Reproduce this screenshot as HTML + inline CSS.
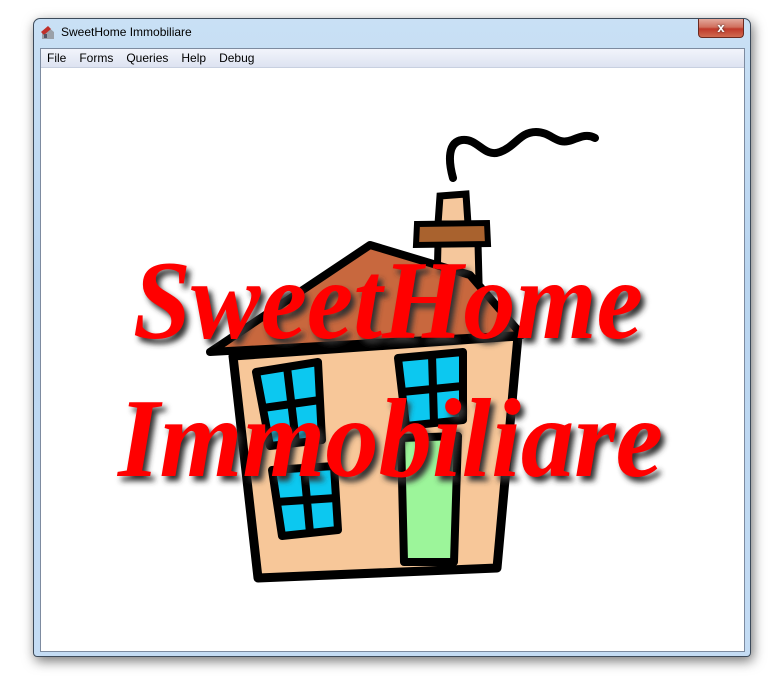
<!DOCTYPE html>
<html><head><style>
html,body{margin:0;padding:0;background:#fff;width:780px;height:680px;overflow:hidden;font-family:"Segoe UI","Liberation Sans",sans-serif;}
.win{position:absolute;left:33px;top:18px;width:718px;height:639px;border:1px solid #3c4a5a;border-radius:7px 7px 4px 4px;background:linear-gradient(180deg,#c9e0f5 0%,#b9d5f0 40%,#c4dcf4 100%);box-shadow:2px 4px 12px rgba(0,0,0,.55);box-sizing:border-box;}
.title{position:absolute;left:27px;top:6px;font-size:12px;color:#000;}
.icon{position:absolute;left:7px;top:7px;width:14px;height:14px;}
.close{position:absolute;left:664px;top:0px;width:46px;height:19px;border:1px solid #6b2a20;border-top:none;border-radius:0 0 4px 4px;background:linear-gradient(180deg,#e3a89c 0%,#d0705e 45%,#c0392a 55%,#d06a50 100%);box-sizing:border-box;color:#fff;text-align:center;font:bold 13px/17px "Liberation Sans",sans-serif;text-shadow:0 0 2px #333;}
.client{position:absolute;left:6px;top:29px;width:705px;height:604px;border:1px solid #7d8ba0;background:#fff;box-sizing:border-box;}
.menu{height:18px;background:linear-gradient(180deg,#f2f4fb,#dde3f1);border-bottom:1px solid #c8d0e0;font-size:12px;line-height:18px;}
.menu span{margin-left:6px;margin-right:7px;}
</style></head><body>
<div class="win">
<svg class="icon" viewBox="0 0 14 14"><path d="M1 6 L7 1 L13 6 L13 13 L1 13Z" fill="#9aa0a8"/><path d="M0 6 L7 0 L10 3 L3 9Z" fill="#c0302a"/><rect x="3" y="8" width="3" height="4" fill="#556"/></svg>
<div class="title">SweetHome Immobiliare</div>
<div class="close">x</div>
<div class="client">
<div class="menu"><span>File</span><span>Forms</span><span>Queries</span><span>Help</span><span>Debug</span></div>
</div>
</div>
<svg style="position:absolute;left:0;top:0" width="780" height="680" viewBox="0 0 780 680">
<defs><filter id="sh" x="-10%" y="-20%" width="120%" height="140%"><feGaussianBlur stdDeviation="3"/></filter></defs>
<!-- smoke -->
<path d="M453 178 C448 160 448 142 462 140 C478 138 484 158 500 152 C516 146 520 132 536 132 C552 132 556 146 572 140 C582 136 588 134 595 138" fill="none" stroke="#000" stroke-width="8" stroke-linecap="round"/>
<!-- chimney -->
<path d="M440 196 L466 194 L468 224 L438 224Z" fill="#f5c79c" stroke="#000" stroke-width="7"/>
<path d="M438 244 L478 243 L480 320 L436 322Z" fill="#f5c79c" stroke="#000" stroke-width="7"/>
<path d="M417 224 L487 223 L488 244 L416 245Z" fill="#a9622e" stroke="#000" stroke-width="6"/>
<!-- roof -->
<path d="M210 352 L370 245 L470 275 L522 335Z" fill="#c8683e" stroke="#000" stroke-width="8" stroke-linejoin="round"/>
<!-- body -->
<path d="M233 356 L518 336 L497 568 L258 578Z" fill="#f7c799" stroke="#000" stroke-width="9" stroke-linejoin="round"/>
<!-- windows -->
<g stroke="#000" stroke-width="8" stroke-linejoin="round">
<path d="M256 372 L318 362 L322 440 L270 446Z" fill="#0cc8f0"/>
<path d="M287 367 L296 443 M263 408 L320 400" fill="none"/>
<path d="M398 358 L463 352 L463 420 L406 426Z" fill="#0cc8f0"/>
<path d="M432 355 L434 423 M402 392 L463 386" fill="none"/>
<path d="M272 470 L334 466 L338 530 L282 536Z" fill="#0cc8f0"/>
<path d="M304 468 L310 533 M276 502 L336 498" fill="none"/>
<path d="M401 438 L458 436 L454 562 L404 562Z" fill="#9cf59a"/>
</g>
<!-- text -->
<g font-family="Liberation Serif,serif" font-weight="bold" font-style="italic" font-size="112">
<g fill="#333" filter="url(#sh)" transform="translate(4,5)">
<text x="133" y="338" textLength="510" lengthAdjust="spacingAndGlyphs">SweetHome</text>
<text x="118" y="476" textLength="545" lengthAdjust="spacingAndGlyphs">Immobiliare</text>
</g>
<g fill="#ff0000">
<text x="133" y="338" textLength="510" lengthAdjust="spacingAndGlyphs">SweetHome</text>
<text x="118" y="476" textLength="545" lengthAdjust="spacingAndGlyphs">Immobiliare</text>
</g>
</g>
</svg>
</body></html>
